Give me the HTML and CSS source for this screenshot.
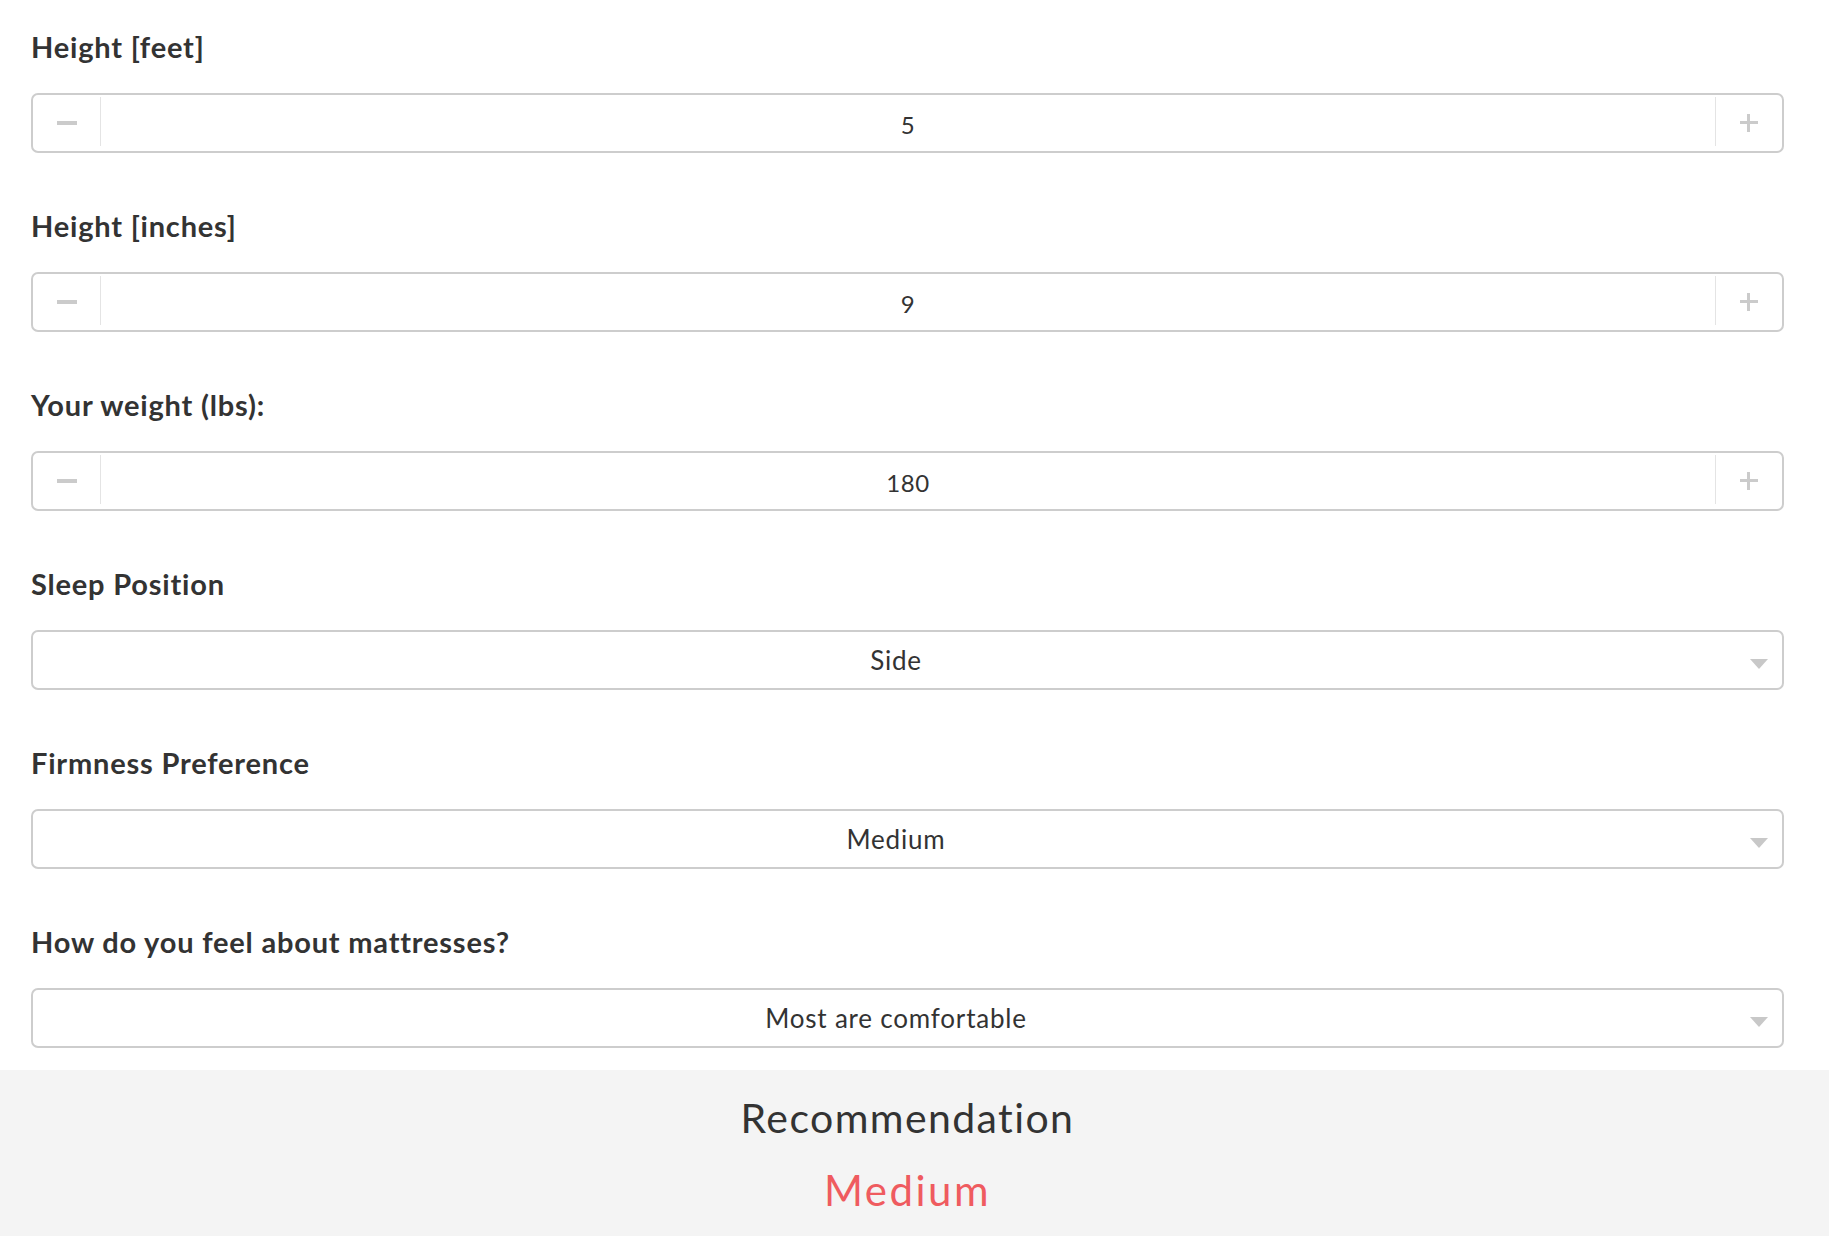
FILE: index.html
```html
<!DOCTYPE html>
<html lang="en">
<head>
<meta charset="utf-8">
<title>Mattress Firmness Calculator</title>
<link rel="stylesheet" href="styles.css">
</head>
<body>
<form class="form">
  <div class="field">
    <label class="label">Height [feet]</label>
    <div class="stepper">
      <button type="button" class="step step-minus"><span class="icon-minus"></span></button>
      <input class="value" type="text" value="5" readonly>
      <button type="button" class="step step-plus"><span class="icon-plus"></span></button>
    </div>
  </div>
  <div class="field">
    <label class="label">Height [inches]</label>
    <div class="stepper">
      <button type="button" class="step step-minus"><span class="icon-minus"></span></button>
      <input class="value" type="text" value="9" readonly>
      <button type="button" class="step step-plus"><span class="icon-plus"></span></button>
    </div>
  </div>
  <div class="field">
    <label class="label">Your weight (lbs):</label>
    <div class="stepper">
      <button type="button" class="step step-minus"><span class="icon-minus"></span></button>
      <input class="value" type="text" value="180" readonly>
      <button type="button" class="step step-plus"><span class="icon-plus"></span></button>
    </div>
  </div>
  <div class="field">
    <label class="label">Sleep Position</label>
    <div class="select-wrap">
      <select class="select"><option>Side</option><option>Back</option><option>Stomach</option></select>
      <span class="caret"></span>
    </div>
  </div>
  <div class="field">
    <label class="label">Firmness Preference</label>
    <div class="select-wrap">
      <select class="select"><option>Medium</option><option>Soft</option><option>Firm</option></select>
      <span class="caret"></span>
    </div>
  </div>
  <div class="field">
    <label class="label">How do you feel about mattresses?</label>
    <div class="select-wrap">
      <select class="select"><option>Most are comfortable</option><option>Most are uncomfortable</option></select>
      <span class="caret"></span>
    </div>
  </div>
</form>
<section class="result">
  <div class="result-title">Recommendation</div>
  <div class="result-value">Medium</div>
</section>
</body>
</html>
```
FILE: styles.css
```css
* { box-sizing: border-box; }
html, body { margin: 0; padding: 0; background: #fff; }
body {
  font-family: Lato, "Open Sans", "Liberation Sans", sans-serif;
  color: #333;
}
.form {
  padding: 30px 45px 0 31px;
  margin: 0;
}
.field {
  display: flex;
  flex-direction: column;
  margin-bottom: 56px;
}
.field:last-child { margin-bottom: 22px; }
.label {
  font-size: 29px;
  line-height: 34px;
  font-weight: 700;
  letter-spacing: 0.8px;
  color: #333;
  margin-bottom: 29px;
}
.stepper {
  display: flex;
  height: 60px;
  border: 2px solid #cdcdcd;
  border-radius: 7px;
  background: #fff;
}
.step {
  flex: 0 0 68px;
  display: flex;
  align-items: center;
  justify-content: center;
  background: transparent;
  border: 0;
  padding: 0;
  margin: 2px 0 5px;
}
.step-minus { border-right: 1px solid #e4e4e4; }
.step-plus { border-left: 1px solid #e4e4e4; flex-basis: 67px; }
.icon-minus {
  display: block;
  width: 20px;
  height: 4px;
  background: #cbcbcb;
  margin-top: 3px;
}
.icon-plus {
  display: block;
  position: relative;
  width: 18px;
  height: 18px;
  margin-top: 3px;
}
.icon-plus::before,
.icon-plus::after {
  content: "";
  position: absolute;
  background: #cbcbcb;
}
.icon-plus::before { left: 0; right: 0; top: 7px; height: 3px; }
.icon-plus::after { top: 0; bottom: 0; left: 7px; width: 3px; }
.value {
  flex: 1 1 auto;
  min-width: 0;
  border: 0;
  outline: none;
  background: transparent;
  text-align: center;
  font-family: inherit;
  font-size: 24px;
  letter-spacing: 0.5px;
  color: #333;
  padding: 3px 0 0;
}
.select-wrap {
  position: relative;
  height: 60px;
}
.select {
  appearance: none;
  -webkit-appearance: none;
  width: 100%;
  height: 60px;
  border: 2px solid #cdcdcd;
  border-radius: 7px;
  background: #fff;
  font-family: inherit;
  font-size: 26px;
  letter-spacing: 0.8px;
  color: #333;
  text-align: center;
  text-align-last: center;
  padding: 0 35px 0 12px;
  outline: none;
}
.caret {
  position: absolute;
  right: 16px;
  top: 29px;
  width: 0;
  height: 0;
  border-left: 9px solid transparent;
  border-right: 9px solid transparent;
  border-top: 10px solid #c8c8c8;
  pointer-events: none;
}
.result {
  background: #f4f4f4;
  padding: 24px 45px 26px 31px;
  text-align: center;
}
.result-title {
  font-size: 41px;
  line-height: 48px;
  font-weight: 400;
  letter-spacing: 1.4px;
  color: #333;
}
.result-value {
  font-size: 42px;
  line-height: 48px;
  font-weight: 400;
  letter-spacing: 2.5px;
  color: #ef5b5f;
  margin-top: 24px;
}
```
